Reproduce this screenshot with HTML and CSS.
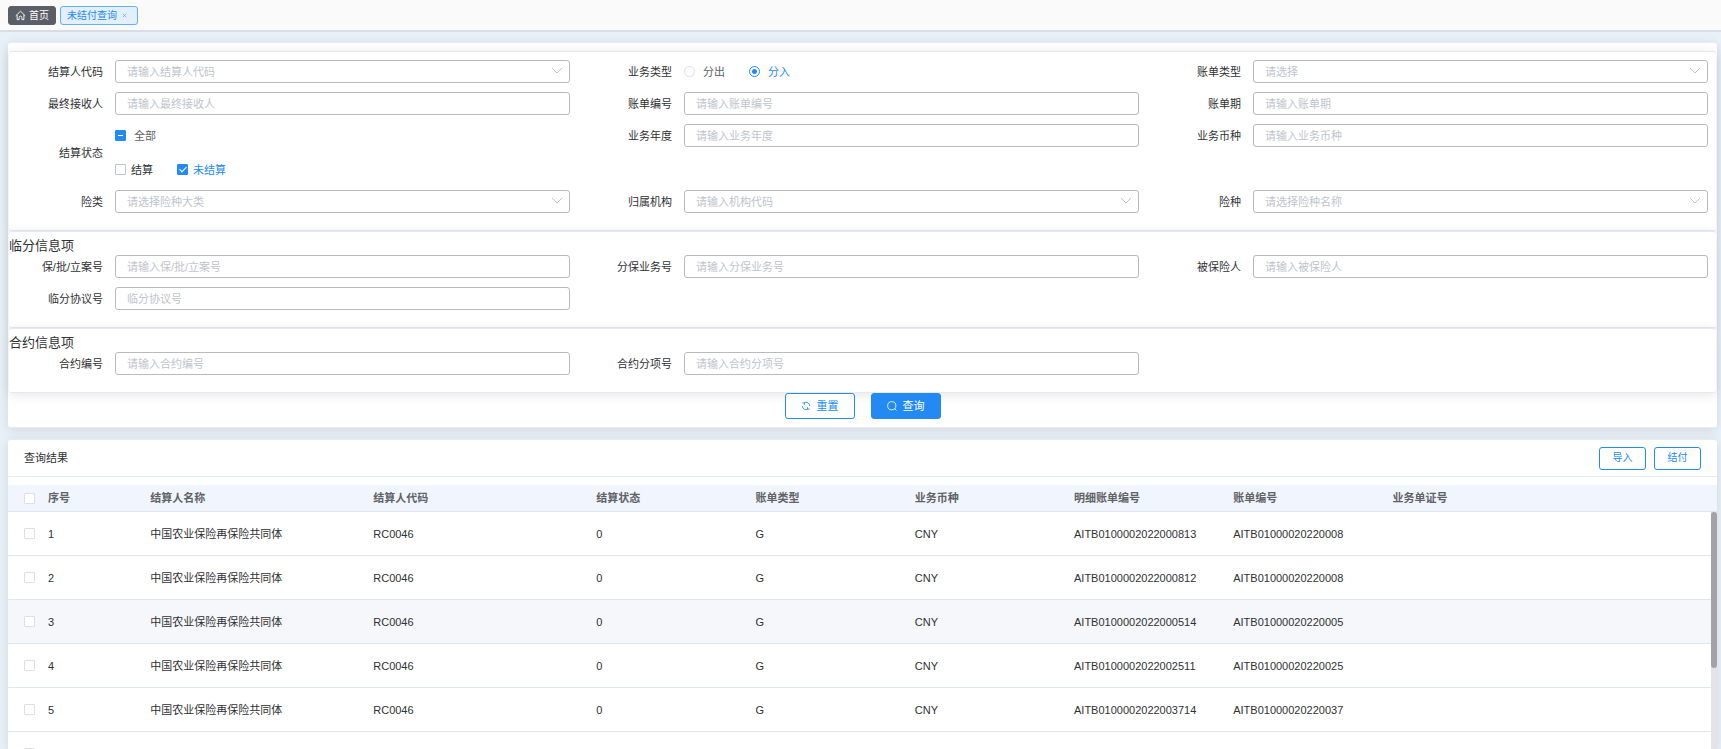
FILE: index.html
```html
<!DOCTYPE html>
<html lang="zh-CN">
<head>
<meta charset="utf-8">
<title>未结付查询</title>
<link rel="stylesheet" href="styles.css">
</head>
<body>
<nav class="tabs">
  <a class="tab tab-home" href="#"><svg class="icon-home" viewBox="0 0 12 12"><path d="M.8 6.400 6 1.300l5.200 5.100M2.300 5.400v5.100h2.200V8.200a1.500 1.500 0 0 1 3 0v2.300h2.200V5.400"/></svg>首页</a>
  <a class="tab tab-active" href="#">未结付查询<svg class="icon-close" viewBox="0 0 6 6"><path d="m1 1 4 4M5 1 1 5"/></svg></a>
</nav>
<main class="page">
  <form class="card search">
    <section class="panel panel-first">
      <div class="grid">
        <div class="field"><label for="f1">结算人代码</label><div class="control select-box"><input id="f1" class="input" placeholder="请输入结算人代码"><svg class="arrow" viewBox="0 0 12 8"><path d="m1 1 5 5 5-5"/></svg></div></div>
        <div class="field"><span class="label" id="l2">业务类型</span><div class="control radios" role="radiogroup" aria-labelledby="l2"><label class="radio"><input type="radio" name="type">分出</label><label class="radio on"><input type="radio" name="type" checked>分入</label></div></div>
        <div class="field"><label for="f3">账单类型</label><div class="control select-box"><input id="f3" class="input" placeholder="请选择"><svg class="arrow" viewBox="0 0 12 8"><path d="m1 1 5 5 5-5"/></svg></div></div>
        <div class="field"><label for="f4">最终接收人</label><div class="control"><input id="f4" class="input" placeholder="请输入最终接收人"></div></div>
        <div class="field"><label for="f5">账单编号</label><div class="control"><input id="f5" class="input" placeholder="请输入账单编号"></div></div>
        <div class="field"><label for="f6">账单期</label><div class="control"><input id="f6" class="input" placeholder="请输入账单期"></div></div>
        <div class="field status"><span class="label" id="l7">结算状态</span><div class="control checks" role="group" aria-labelledby="l7">
          <label class="check all"><input class="box partial" type="checkbox">全部</label>
          <div class="check-row"><label class="check"><input class="box dark" type="checkbox">结算</label><label class="check on"><input class="box" type="checkbox" checked>未结算</label></div>
        </div></div>
        <div class="field"><label for="f8">业务年度</label><div class="control"><input id="f8" class="input" placeholder="请输入业务年度"></div></div>
        <div class="field"><label for="f9">业务币种</label><div class="control"><input id="f9" class="input" placeholder="请输入业务币种"></div></div>
        <div class="field"><label for="f10">险类</label><div class="control select-box"><input id="f10" class="input" placeholder="请选择险种大类"><svg class="arrow" viewBox="0 0 12 8"><path d="m1 1 5 5 5-5"/></svg></div></div>
        <div class="field"><label for="f11">归属机构</label><div class="control select-box"><input id="f11" class="input" placeholder="请输入机构代码"><svg class="arrow" viewBox="0 0 12 8"><path d="m1 1 5 5 5-5"/></svg></div></div>
        <div class="field"><label for="f12">险种</label><div class="control select-box"><input id="f12" class="input" placeholder="请选择险种名称"><svg class="arrow" viewBox="0 0 12 8"><path d="m1 1 5 5 5-5"/></svg></div></div>
      </div>
    </section>
    <section class="panel">
      <h2 class="panel-title">临分信息项</h2>
      <div class="grid">
        <div class="field"><label for="f13">保/批/立案号</label><div class="control"><input id="f13" class="input" placeholder="请输入保/批/立案号"></div></div>
        <div class="field"><label for="f14">分保业务号</label><div class="control"><input id="f14" class="input" placeholder="请输入分保业务号"></div></div>
        <div class="field"><label for="f15">被保险人</label><div class="control"><input id="f15" class="input" placeholder="请输入被保险人"></div></div>
        <div class="field"><label for="f16">临分协议号</label><div class="control"><input id="f16" class="input" placeholder="临分协议号"></div></div>
      </div>
    </section>
    <section class="panel">
      <h2 class="panel-title">合约信息项</h2>
      <div class="grid">
        <div class="field"><label for="f17">合约编号</label><div class="control"><input id="f17" class="input" placeholder="请输入合约编号"></div></div>
        <div class="field"><label for="f18">合约分项号</label><div class="control"><input id="f18" class="input" placeholder="请输入合约分项号"></div></div>
      </div>
    </section>
    <div class="actions">
      <button type="button" class="btn"><svg class="icon" viewBox="0 0 12 12"><path d="M3.600 2.300A4.400 4.400 0 0 1 10.400 6M1.600 6a4.400 4.400 0 0 0 6.800 3.700M1.500 2.300h2.600v2.400M10.500 9.700H7.900V7.300"/></svg>重置</button>
      <button type="button" class="btn primary"><svg class="icon" viewBox="0 0 12 12"><circle cx="5.700" cy="5.700" r="4.900"/><path d="m9 9 2.300 2.300"/></svg>查询</button>
    </div>
  </form>
  <section class="card results">
    <header class="results-head"><h2 class="results-title">查询结果</h2><div class="tools"><button type="button" class="btn small">导入</button><button type="button" class="btn small">结付</button></div></header>
    <div class="thead-wrap">
      <table class="table">
        <colgroup><col class="c-check"><col class="c-no"><col class="c-wide"><col class="c-wide"><col class="c-mid"><col class="c-mid"><col class="c-mid"><col class="c-mid"><col class="c-mid"><col></colgroup>
        <thead><tr><th><input class="box" type="checkbox"></th><th>序号</th><th>结算人名称</th><th>结算人代码</th><th>结算状态</th><th>账单类型</th><th>业务币种</th><th>明细账单编号</th><th>账单编号</th><th>业务单证号</th></tr></thead>
      </table>
    </div>
    <div class="tbody-wrap">
      <div class="tbody-view">
      <table class="table">
        <colgroup><col class="c-check"><col class="c-no"><col class="c-wide"><col class="c-wide"><col class="c-mid"><col class="c-mid"><col class="c-mid"><col class="c-mid"><col class="c-mid"><col></colgroup>
        <tbody>
          <tr><td><input class="box" type="checkbox"></td><td>1</td><td>中国农业保险再保险共同体</td><td>RC0046</td><td>0</td><td>G</td><td>CNY</td><td>AITB0100002022000813</td><td>AITB01000020220008</td><td></td></tr>
          <tr><td><input class="box" type="checkbox"></td><td>2</td><td>中国农业保险再保险共同体</td><td>RC0046</td><td>0</td><td>G</td><td>CNY</td><td>AITB0100002022000812</td><td>AITB01000020220008</td><td></td></tr>
          <tr class="hover"><td><input class="box" type="checkbox"></td><td>3</td><td>中国农业保险再保险共同体</td><td>RC0046</td><td>0</td><td>G</td><td>CNY</td><td>AITB0100002022000514</td><td>AITB01000020220005</td><td></td></tr>
          <tr><td><input class="box" type="checkbox"></td><td>4</td><td>中国农业保险再保险共同体</td><td>RC0046</td><td>0</td><td>G</td><td>CNY</td><td>AITB0100002022002511</td><td>AITB01000020220025</td><td></td></tr>
          <tr><td><input class="box" type="checkbox"></td><td>5</td><td>中国农业保险再保险共同体</td><td>RC0046</td><td>0</td><td>G</td><td>CNY</td><td>AITB0100002022003714</td><td>AITB01000020220037</td><td></td></tr>
          <tr><td><input class="box" type="checkbox"></td><td colspan="9"></td></tr>
        </tbody>
      </table>
      </div>
      <div class="scroll-track"><div class="scroll-thumb"></div></div>
    </div>
  </section>
</main>
</body>
</html>
```
FILE: styles.css
```css
* { box-sizing: border-box; }
body {
  margin: 0;
  height: 100vh;
  display: flex;
  flex-direction: column;
  overflow: hidden;
  background: #e8f0f8;
  color: #303133;
  font: 11px/16px "Liberation Sans", "Noto Sans CJK SC", sans-serif;
}
input, button { font: inherit; margin: 0; }
h2 { margin: 0; font-weight: 400; }
svg { fill: none; stroke: currentColor; flex: none; }

.tabs {
  display: flex;
  gap: 4px;
  height: 32px;
  padding: 6px 8px 0;
  background: #fafafa;
  border-bottom: 2px solid #d8dce5;
  flex: none;
}
.tab {
  display: flex;
  align-items: center;
  height: 19px;
  border: 1px solid #64b0f5;
  border-radius: 3px;
  padding: 0 6px;
  font-size: 10px;
  text-decoration: none;
}
.tab-home { background: #5a5e66; border-color: #5a5e66; color: #fff; gap: 3px; }
.tab-active { background: #e3effa; color: #228af2; padding-right: 10px; gap: 5px; }
.icon-home { width: 11px; height: 11px; }
.icon-close { width: 5px; height: 5px; stroke-width: 1; opacity: .6; }

.page {
  flex: 1;
  min-height: 0;
  display: flex;
  flex-direction: column;
  gap: 11px;
  padding: 10px 4px 0 8px;
}
.card {
  background: #fff;
  border: solid #e6ebf5;
  border-width: 1px 0;
  border-radius: 3px;
  box-shadow: 0 2px 12px rgba(0, 0, 0, .1);
}
.search { padding: 8px 1px 0; flex: none; }
.panel {
  border: solid #e6e8f3;
  border-width: 1px 0;
  border-radius: 3px;
  padding-bottom: 16px;
  background: #fff;
  box-shadow: 0 2px 12px rgba(0, 0, 0, .1);
}
.panel-first { padding-top: 8px; }
.panel-title { height: 23px; padding-top: 5px; font-size: 13px; line-height: 18px; }
.grid { display: grid; grid-template-columns: repeat(3, 1fr); row-gap: 8px; }
.field { display: flex; align-items: flex-start; padding-right: 8px; }
.field > label, .label { width: 106px; padding-right: 12px; text-align: right; line-height: 24px; flex: none; }
.status { align-items: center; padding-bottom: 1px; }
.control { flex: 1; min-width: 0; }
.input {
  display: block;
  width: 100%;
  height: 23px;
  border: 1px solid #b8babd;
  border-radius: 3px;
  padding: 0 11px;
  background: #fff;
  color: #606266;
  outline: 0;
}
.input::placeholder { color: #c0c4cc; opacity: 1; }
.select-box { position: relative; }
.arrow { position: absolute; right: 7px; top: 7px; width: 12px; height: 8px; color: #c0c4cc; }

.radios { display: flex; gap: 24px; height: 23px; }
.radio, .check { display: flex; align-items: center; color: #606266; }
.radio { gap: 8px; }
.radio input {
  appearance: none;
  width: 11px;
  height: 11px;
  border: 1px solid #dcdfe6;
  border-radius: 50%;
  background: #fff;
}
.radio input:checked { border-color: #228af2; background: radial-gradient(circle, #228af2 2px, #fff 3px); }
.checks { display: flex; flex-direction: column; gap: 11px; }
.check { height: 23px; gap: 5px; color: #303133; }
.check.all { gap: 8px; color: #606266; }
.radio.on, .check.on { color: #228af2; }
.check-row { display: flex; gap: 24px; }
.box {
  appearance: none;
  display: block;
  flex: none;
  position: relative;
  width: 11px;
  height: 11px;
  border: 1px solid #dcdfe6;
  border-radius: 1px;
  background: #fff;
}
.box.dark { border-color: #c0c4d0; }
.box:checked, .box.partial { background: #228af2; border-color: #228af2; }
.box.partial::after { content: ""; position: absolute; left: 2px; top: 4px; width: 5px; height: 1px; background: #fff; }
.box:checked::after {
  content: "";
  position: absolute;
  left: 3px;
  top: 0;
  width: 3px;
  height: 6px;
  border: solid #fff;
  border-width: 0 1px 1px 0;
  transform: rotate(45deg);
}

.actions { display: flex; justify-content: center; gap: 16px; padding-bottom: 8px; }
.btn {
  display: flex;
  align-items: center;
  justify-content: center;
  gap: 6px;
  min-width: 70px;
  height: 26px;
  padding: 0 12px;
  border: 1px solid #228af2;
  border-radius: 3px;
  background: #fff;
  color: #228af2;
}
.btn.primary { background: #228af2; color: #fff; }
.btn.small { min-width: 47px; height: 23px; font-size: 10px; }
.icon { width: 10px; height: 10px; }

.results { flex: 1; min-height: 0; display: flex; flex-direction: column; border-bottom: 0; border-radius: 3px 3px 0 0; }
.results-head {
  display: flex;
  align-items: center;
  justify-content: space-between;
  height: 37px;
  padding: 0 16px;
  border-bottom: 1px solid #e6ebf5;
  margin-bottom: 8px;
  flex: none;
}
.results-title { font-size: 11px; }
.tools { display: flex; gap: 8px; }
.thead-wrap { background: #f1f6fe; padding-right: 6px; border-bottom: 1px solid #dfe6ec; flex: none; }
.tbody-wrap { flex: 1; min-height: 0; display: flex; }
.tbody-view { flex: 1; min-width: 0; overflow: hidden; }
.scroll-track { width: 6px; flex: none; background: #e4e4e4; }
.scroll-thumb { height: 66%; border-radius: 3px; background: #a1a3a9; }
.table { width: 100%; table-layout: fixed; border-collapse: separate; border-spacing: 0; }
.c-check { width: 33px; }
.c-no { width: 6%; }
.c-wide { width: 13.1%; }
.c-mid { width: 9.35%; }
th, td { padding: 0 7px; text-align: left; white-space: nowrap; }
th:first-child, td:first-child { padding-left: 16px; padding-right: 0; }
th { height: 26px; color: #606266; font-weight: 700; }
td { height: 44px; border-bottom: 1px solid #dfe6ec; }
.hover td { background: #f5f7fa; }
```
